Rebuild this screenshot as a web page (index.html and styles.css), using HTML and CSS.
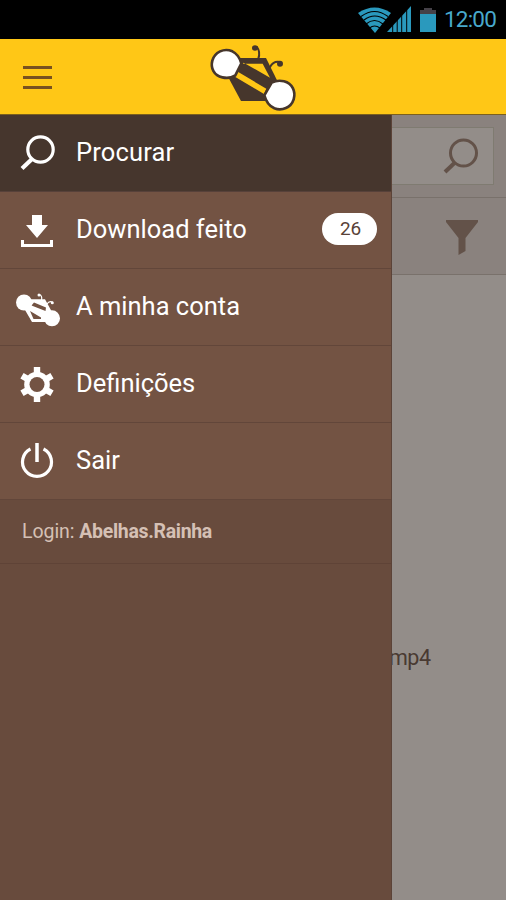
FILE: index.html
```html
<!DOCTYPE html>
<html lang="pt">
<head>
<meta charset="utf-8">
<title>Menu</title>
<link rel="stylesheet" href="styles.css">
</head>
<body>
<div class="status">
  <svg class="status-icons" width="80" height="39" viewBox="0 0 80 39">
    <path fill="#2a99bd" d="M0 13Q16.500 2 33 13L17 33Z"/>
    <path fill="none" stroke="#000" stroke-width="1.100" d="M3 16.500Q16.500 6.500 30 16.500M6 20Q16.500 12 28 20M8 24Q16.500 17 25 24M11.500 28Q16.500 24 22 28"/>
    <path fill="#2a99bd" d="M29 32L53 6V32Z"/>
    <path stroke="#000" stroke-width="1" d="M34.700 20V33M39.200 16V33M43.700 10V33M48.700 5V33"/>
    <path fill="#454148" d="M66 8h8v2h4v4H62v-4h4z"/>
    <path fill="#2a99bd" d="M62 14h16v18H62z"/>
  </svg>
  <span class="clock">12:00</span>
</div>
<header class="header">
  <div class="burger"><i></i><i></i><i></i></div>
  <svg class="logo" width="120" height="75" viewBox="0 9 360 225">
    <path fill="#46362c" d="M134 66H213L249 139L211 195H138L103 130Z"/>
    <path fill="#ffc716" d="M143 83H203L225 125L146 80ZM126 106L214 158L207 174L121 123Z"/>
    <g fill="none" stroke="#46362c" stroke-width="6" stroke-linecap="round"><path d="M190 68Q197 48 186 33"/><path d="M225 93Q235 74 255 78"/></g>
    <ellipse cx="180" cy="36" rx="9" ry="8" fill="#46362c"/><circle cx="255" cy="83" r="9" fill="#46362c"/>
    <g fill="#fff" stroke="#46362c" stroke-width="8">
      <path d="M139 82L121 118Q104 129 82 124C57 119 46 96 52 74C59 48 87 35 112 46Q132 56 139 82Z"/>
      <path d="M208 178L230 140Q248 131 267 136C292 142 303 167 296 190C288 215 261 226 238 217Q216 207 208 178Z"/>
    </g>
  </svg>
</header>
<main class="main">
  <nav class="drawer">
    <a class="item active">
      <svg width="76" height="76" viewBox="0 0 76 76" fill="none" stroke="#fff"><circle cx="40.500" cy="34.500" r="12.700" stroke-width="3.200"/><path stroke-width="4.200" d="M22 53.500L32 44"/></svg>
      <span>Procurar</span>
    </a>
    <a class="item">
      <svg width="76" height="76" viewBox="0 0 76 76" fill="#fff"><path d="M32 23h10v10h6L37 46 26 33h6zM21 48h3v4h26v-4h3v7H21z"/></svg>
      <span>Download feito</span><b class="badge">26</b>
    </a>
    <a class="item">
      <svg width="76" height="76" viewBox="0 0 76 76" fill="#fff">
        <path fill-rule="evenodd" d="M29 30.300H45L52 43L45 53H32L25 41ZM34 33.500L46 38.500L45.500 42L31.500 36.500ZM30 42L41 48.500V50H33.500Z"/>
        <circle cx="24" cy="33.500" r="8"/><circle cx="52" cy="49.300" r="8"/>
        <g fill="none" stroke="#fff" stroke-width="1.200"><path d="M41.500 31Q42.500 27 39.500 25.500M47 35Q49 31.500 52.500 33"/></g>
        <circle cx="39" cy="26" r="1.500"/><circle cx="52.300" cy="33.700" r="1.500"/>
      </svg>
      <span>A minha conta</span>
    </a>
    <a class="item">
      <svg width="76" height="76" viewBox="0 0 76 76"><g stroke="#fff" stroke-width="6.400"><path d="M37 21V56M22 29.800L52 47.200M22 47.200L52 29.800"/></g><circle cx="37" cy="38.500" r="12.800" fill="#fff"/><circle cx="37" cy="38.500" r="7.500" fill="#735343"/></svg>
      <span>Definições</span>
    </a>
    <a class="item">
      <svg width="76" height="76" viewBox="0 0 76 76" fill="none" stroke="#fff" stroke-width="3.200"><path d="M30.500 26A14.500 14.500 0 1 0 43.500 26"/><path stroke-width="3.500" d="M37 20V39"/></svg>
      <span>Sair</span>
    </a>
    <div class="login">Login: <b>Abelhas.Rainha</b></div>
  </nav>
  <section class="content">
    <div class="search"><div class="field">
      <svg width="40" height="55" viewBox="0 0 40 55" fill="none" stroke="#635249"><circle cx="20.500" cy="25" r="13" stroke-width="3"/><path stroke-width="4" d="M2 44L12 34.500"/></svg>
    </div></div>
    <div class="filter"><svg width="32" height="36" viewBox="0 0 32 36"><path fill="#635249" d="M0 0H32V2L19.500 18V31L12.500 35V18L0 2Z"/></svg></div>
    <div class="file">mp4</div>
  </section>
</main>
</body>
</html>
```
FILE: styles.css
```css
* { box-sizing: border-box; }
body { margin: 0; width: 506px; height: 900px; overflow: hidden; font-family: Roboto, sans-serif; display: flex; flex-direction: column; }
svg { display: block; flex: none; }
.status { height: 39px; background: #000; display: flex; align-items: center; justify-content: flex-end; padding-right: 10px; }
.clock { color: #48a9cc; font-size: 22.500px; line-height: 39px; width: 52px; margin-left: 6px; white-space: nowrap; letter-spacing: -.8px; }
.header { height: 76px; background: #ffc716; border-bottom: 1px solid #7b601e; display: flex; align-items: center; }
.burger { width: 29px; margin: 2px 0 0 23px; display: grid; gap: 7px; }
.burger i { height: 3px; background: #79511f; }
.logo { margin-left: 143px; }
.main { flex: 1; display: flex; min-height: 0; }
.drawer { width: 392px; background: #684b3d; border-right: 1px solid #5b4338; }
.item { height: 77px; display: flex; align-items: center; background: #735343; border-bottom: 1px solid #62463a; color: #fff; font-size: 25.500px; letter-spacing: 0; }
.item span { margin-top: -2px; }
.item.active { background: #46362d; border-bottom-color: #57413a; letter-spacing: .15px; }
.badge { margin: -3px 14px 0 auto; width: 55px; height: 32px; border-radius: 16px; background: #fff; color: #594238; font-size: 19px; font-weight: 400; line-height: 32px; text-align: center; padding-left: 2px; letter-spacing: -.3px; }
.login { height: 64px; border-bottom: 1px solid #5f4337; padding-left: 22px; line-height: 63px; font-size: 19.500px; color: #d5c0b5; letter-spacing: -.05px; }
.login b { letter-spacing: -.32px; }
.content { flex: 1; background: #938d89; overflow: hidden; }
.search { height: 83px; background: #8a827e; border-bottom: 1px solid #79716b; padding: 12px 12px 0 0; }
.field { height: 58px; background: #938d89; border: 1px solid #7f7b71; border-left: 0; display: flex; justify-content: flex-end; padding-right: 10px; }
.filter { height: 77px; background: #8a827e; border-bottom: 1px solid #79716b; padding: 22px 0 0 54px; }
.file { margin: 369px 0 0 -3px; font-size: 21.500px; line-height: 28px; letter-spacing: -.5px; color: #493a32; }
```
